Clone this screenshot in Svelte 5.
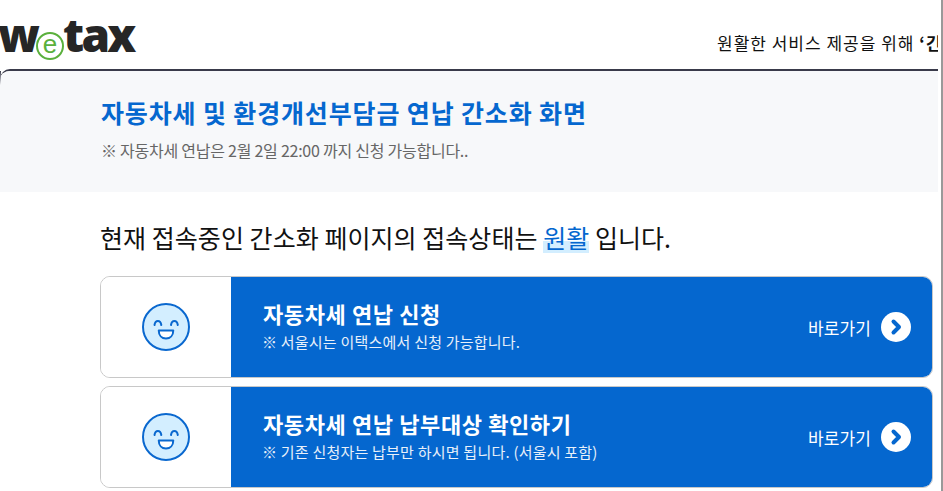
<script>
    let cards = [
        { title: '자동차세 연납 신청', note: '※ 서울시는 이택스에서 신청 가능합니다.' },
        { title: '자동차세 연납 납부대상 확인하기', note: '※ 기존 신청자는 납부만 하시면 됩니다. (서울시 포함)' }
    ];
</script>

<div class="frame">
    <div class="page">
        <header class="top">
            <div class="logo">
                <span>w</span>
                <span class="logo-e">e</span>
                <span>tax</span>
            </div>
            <div class="notice">원활한 서비스 제공을 위해 <b>‘긴급 공지</b></div>
        </header>

        <div class="sheet">
            <section class="head">
                <h1>자동차세 및 환경개선부담금 연납 간소화 화면</h1>
                <p>※ 자동차세 연납은 2월 2일 22:00 까지 신청 가능합니다..</p>
            </section>

            <section class="body">
                <h2>현재 접속중인 간소화 페이지의 접속상태는 <em>원활</em> 입니다.</h2>

                <div class="cards">
                    {#each cards as card}
                        <div class="card">
                            <div class="face">
                                <svg width="48" height="48" viewBox="0 0 48 48" fill="none">
                                    <circle cx="24" cy="24" r="23" fill="#d3eeff" stroke="#0a68cf" stroke-width="2"/>
                                    <path d="M12.500 22c.8-5.300 6-5.300 6.800 0M29 22c.8-5.300 6-5.300 6.800 0" stroke="#0a68cf" stroke-width="2" stroke-linecap="round"/>
                                    <path d="M16.750 27.500h14.500c0 4.800-3 8-7.250 8s-7.250-3.200-7.250-8z" fill="#fff" stroke="#0a68cf" stroke-width="2" stroke-linejoin="round"/>
                                </svg>
                            </div>
                            <div class="action">
                                <div class="copy">
                                    <strong>{card.title}</strong>
                                    <span>{card.note}</span>
                                </div>
                                <div class="go">
                                    바로가기
                                    <svg width="30" height="30" viewBox="0 0 30 30">
                                        <circle cx="15" cy="15" r="15" fill="#fff"/>
                                        <path d="M12.500 9.500l5.500 5.500-5.500 5.500" fill="none" stroke="#0567cf" stroke-width="4" stroke-linecap="round" stroke-linejoin="round"/>
                                    </svg>
                                </div>
                            </div>
                        </div>
                    {/each}
                </div>
            </section>
        </div>
    </div>
</div>

<style>
    :global(body)
    {
        margin: 0;
        background: #fff;
        overflow: hidden;
    }

    .frame
    {
        width: 943px;
        height: 491px;
        box-sizing: border-box;
        padding-right: 3px;
        border-right: 2px solid #999;
    }

    .page
    {
        height: 491px;
        overflow: hidden;
        font-family: "Noto Sans CJK KR", "Noto Sans", sans-serif;
        color: #111;
    }

    .top
    {
        height: 69px;
        display: flex;
        justify-content: space-between;
        white-space: nowrap;
    }

    .logo
    {
        display: flex;
        align-items: baseline;
        height: 52px;
        margin: 2px 0 0 -2px;
        font-family: "Open Sans", sans-serif;
        font-weight: 800;
        font-size: 46px;
        line-height: 64px;
        letter-spacing: -2.800px;
        color: #262626;
    }

    .logo-e
    {
        box-sizing: border-box;
        width: 28px;
        height: 28px;
        margin: 0 -1px 0 -1px;
        border: 2px solid #5ab03c;
        border-radius: 50%;
        font-family: "Liberation Sans", sans-serif;
        font-weight: 400;
        font-size: 26px;
        line-height: 21px;
        letter-spacing: 0;
        text-align: center;
        color: #5ab03c;
        transform: translateY(1px);
    }

    .notice
    {
        margin-top: 31px;
        width: 221px;
        overflow: hidden;
        font-size: 17px;
        line-height: 24px;
        letter-spacing: 1px;
    }

    .sheet
    {
        border-top: 2px solid #393a4a;
        border-radius: 10px 0 0 0;
    }

    .head
    {
        height: 121px;
        box-sizing: border-box;
        padding: 24px 0 0 100px;
        background: #f7f8fa;
        border-radius: 10px 0 0 0;
        border-left: 1px solid #393a4a;
        border-image: linear-gradient(#393a4a, #f7f8fa 14px) 1;
        border-image-slice: 0 0 0 1;
    }

    .head h1
    {
        margin: 0;
        font-size: 25px;
        line-height: 34px;
        font-weight: 700;
        letter-spacing: 0.850px;
        color: #0567cf;
    }

    .head p
    {
        margin: 10px 0 0;
        font-size: 16px;
        line-height: 22px;
        letter-spacing: -0.250px;
        color: #666;
    }

    .body
    {
        padding: 26px 5px 0 100px;
    }

    .body h2
    {
        margin: 0 0 20px;
        font-size: 25px;
        line-height: 38px;
        font-weight: 400;
        letter-spacing: 0.050px;
        color: #111;
    }

    .body em
    {
        font-style: normal;
        color: #0567cf;
        background: linear-gradient(transparent 62%, #d3eeff 62%, #d3eeff 95%, transparent 95%);
    }

    .cards
    {
        display: flex;
        flex-direction: column;
        gap: 8px;
    }

    .card
    {
        height: 102px;
        display: flex;
        box-sizing: border-box;
        border: 1px solid #c8c8c8;
        border-radius: 10px;
        overflow: hidden;
    }

    .face
    {
        width: 130px;
        display: flex;
        align-items: center;
        justify-content: center;
        background: #fff;
    }

    .action
    {
        flex: 1;
        display: flex;
        align-items: center;
        justify-content: space-between;
        padding: 0 21px 0 31px;
        background: #0567cf;
        color: #fff;
    }

    .copy
    {
        display: flex;
        flex-direction: column;
        margin-top: -3px;
    }

    .copy strong
    {
        font-size: 22px;
        line-height: 28px;
        font-weight: 700;
        letter-spacing: 0.600px;
        margin-left: 1px;
    }

    .copy span
    {
        margin-top: 4px;
        font-size: 15px;
        line-height: 22px;
        letter-spacing: 0.220px;
        color: #e8f0fa;
    }

    .go
    {
        display: flex;
        align-items: center;
        gap: 10px;
        font-size: 17px;
        letter-spacing: 0.100px;
    }
</style>
